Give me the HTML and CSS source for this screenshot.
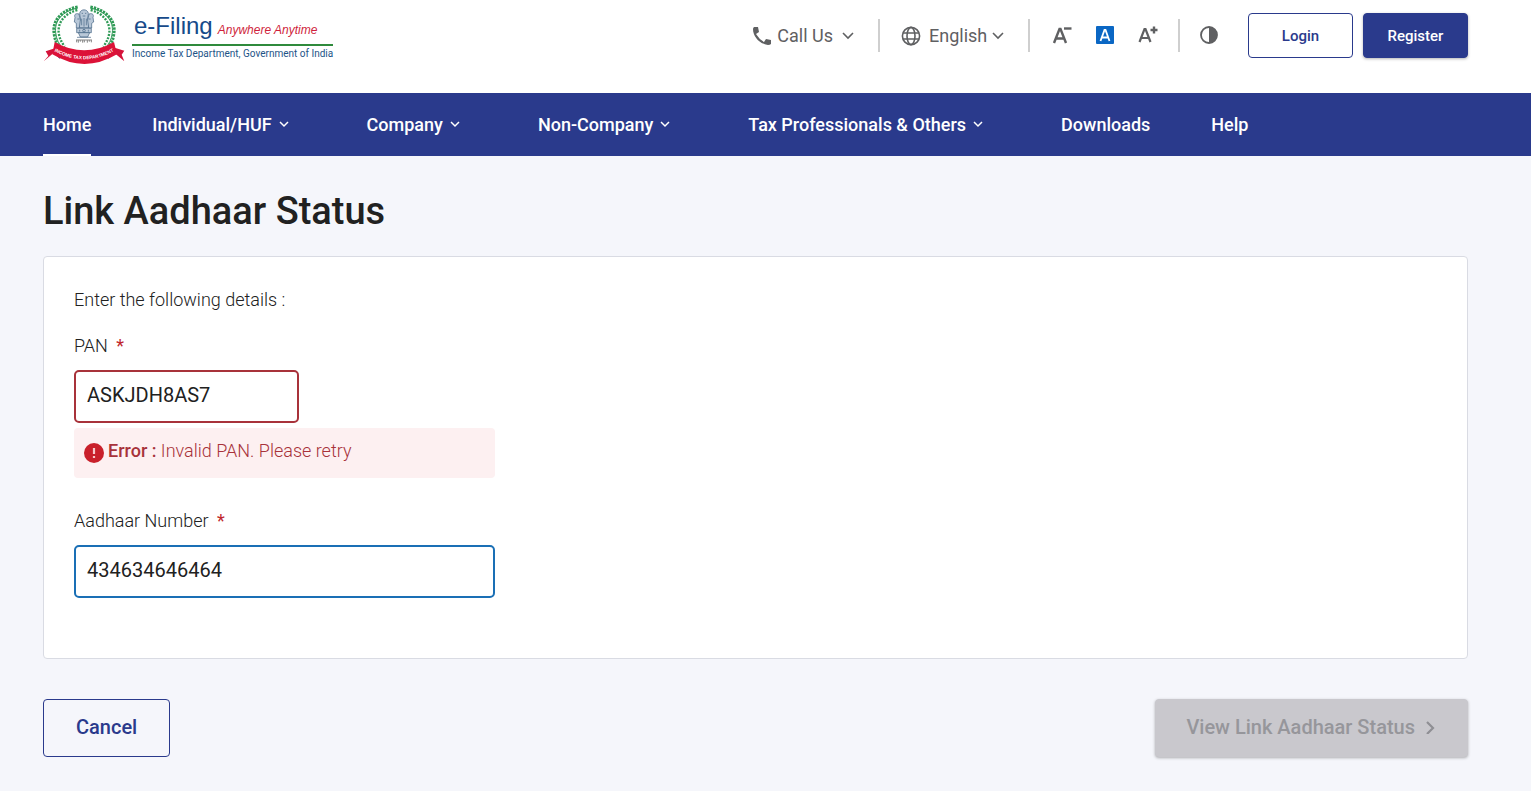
FILE: index.html
```html
<!DOCTYPE html>
<html lang="en">
<head>
    <meta charset="UTF-8">
    <meta name="viewport" content="width=device-width, initial-scale=1.0">
    <title>Link Aadhaar Status</title>
    <link rel="stylesheet" href="styles.css">
</head>
<body>
    <header class="top-bar">
        <a href="#" class="logo">
            <svg class="emblem" viewBox="24 6 246 189" aria-hidden="true">
                <!-- Wreath -->
                <g fill="none" stroke="#2f9a56">
                    <path d="M127 24C82 34 58 62 62 98c2 20 10 34 22 48" stroke-width="3"/>
                    <path d="M167 24c45 10 69 38 65 74-2 20-10 34-22 48" stroke-width="3"/>
                    <path d="M128 21C80 30 52 62 57 98c2 20 8 34 20 48" stroke-width="9" stroke-dasharray="7 3"/>
                    <path d="M166 21c48 9 76 41 71 77-2 20-8 34-20 48" stroke-width="9" stroke-dasharray="7 3"/>
                    <path d="M127 30C90 40 68 66 71 98c2 16 8 28 18 42" stroke-width="7" stroke-dasharray="6 4"/>
                    <path d="M167 30c37 10 59 36 56 68-2 16-8 28-18 42" stroke-width="7" stroke-dasharray="6 4"/>
                </g>
                <!-- Lions and abacus -->
                <g fill="#b9c8d8" stroke="#3e5f80" stroke-width="2">
                    <path d="M134 40c2-14 24-14 26 0l-2 19 4 8-2 16h-26l-2-16 4-8z"/>
                    <path d="M132 42c-12-4-15 4-12 10l-2 14 6 4v14h9l3-24z"/>
                    <path d="M162 42c12-4 15 4 12 10l2 14-6 4v14h-9l-3-24z"/>
                    <path d="M125 85h44v13h-44z"/>
                    <path d="M130 98h34l-6 13h-22z"/>
                </g>
                <g fill="none" stroke="#3e5f80" stroke-width="2">
                    <path d="M140 40h4M150 40h4M143 48h8M140 56v20M147 54v26M154 56v20M127 57h6M161 57h6M126 112h42"/>
                    <circle cx="147" cy="92" r="4"/>
                    <path d="M134 89v6M160 89v6"/>
                    <path d="M123 120h48M125 121v6M130 121v7M136 121v4M143 121v7M148 121v6M157 121v7M163 121v4M169 121v6" stroke="#444"/>
                </g>
                <!-- Ribbon -->
                <path d="M62 154l-36 30 14-16-8-14 30-10zM232 154l36 30-8-20 8-12-34-10z" fill="#d5133a"/>
                <path d="M56 158l18 18 8-10zM238 158l-18 18-8-10z" fill="#2a3f86"/>
                <path d="M59 126q88 50 178 0l9 37q-98 58-194 0z" fill="#dc1238"/>
                <path id="ribbonLine" d="M46 147q101 62 202 0" fill="none"/>
                <text class="ribbon-text"><textPath href="#ribbonLine" startOffset="50%" text-anchor="middle">INCOME TAX DEPARTMENT</textPath></text>
            </svg>
            <span class="brand">
                <span class="brand-top"><span class="brand-name">e-Filing</span> <em class="brand-slogan">Anywhere Anytime</em></span>
                <span class="brand-dept">Income Tax Department, Government of India</span>
            </span>
        </a>

        <div class="tools">
            <button type="button" class="tool call">
                <svg width="20" height="20" viewBox="0 0 20 20" aria-hidden="true"><path d="M2 1h4l1 5-3 2q3 5 8 8l2-3 5 1v4q-1 1-3 1C8 18 1 11 1 3q0-1 1-2z" fill="#5f6062"/></svg>
                <span>Call Us</span>
                <svg class="arrow" width="12" height="8" viewBox="0 0 12 8" aria-hidden="true"><path d="M1 1l5 5 5-5" fill="none" stroke="#5f6062" stroke-width="1.6"/></svg>
            </button>
            <div class="tool language">
                <svg width="20" height="20" viewBox="0 0 20 20" fill="none" stroke="#5f6062" stroke-width="1.6" aria-hidden="true"><circle cx="10" cy="10" r="8.6"/><ellipse cx="10" cy="10" rx="4" ry="8.6"/><path d="M2 7h16M2 13h16"/></svg>
                <select aria-label="Language">
                    <option>English</option>
                </select>
                <svg class="arrow" width="12" height="8" viewBox="0 0 12 8" aria-hidden="true"><path d="M1 1l5 5 5-5" fill="none" stroke="#5f6062" stroke-width="1.6"/></svg>
            </div>
            <div class="tool font-size">
                <button type="button" aria-label="Decrease text size">
                    <svg width="20" height="20" viewBox="0 0 20 20" fill="none" stroke="#5f6062" aria-hidden="true"><path d="M2 17L7.500 3h1l5.500 14M4 12.500h8" stroke-width="2.4"/><path d="M12 2.500h7.500" stroke-width="2.4"/></svg>
                </button>
                <button type="button" aria-label="Default text size">
                    <svg width="20" height="20" viewBox="0 0 20 20" aria-hidden="true"><rect x="1" y="0" width="18" height="18" rx="1" fill="#0a67c4"/><path d="M5.500 15l4-11h1l4 11M7 11.500h6" fill="none" stroke="#fff" stroke-width="1.800"/></svg>
                </button>
                <button type="button" aria-label="Increase text size">
                    <svg width="20" height="20" viewBox="0 0 20 20" fill="none" stroke="#5f6062" aria-hidden="true"><path d="M1.500 16L6.500 3h1l5 13M3.500 12h7" stroke-width="2.200"/><path d="M12.500 4h7M16 0.500v7" stroke-width="2.400"/></svg>
                </button>
            </div>
            <button type="button" class="tool contrast" aria-label="Contrast">
                <svg width="20" height="20" viewBox="0 0 20 20" aria-hidden="true"><circle cx="10" cy="9" r="8" fill="none" stroke="#5f6062" stroke-width="1.800"/><path d="M10 1a8 8 0 0 1 0 16z" fill="#5f6062"/></svg>
            </button>
            <button type="button" class="btn btn-small">Login</button>
            <button type="button" class="btn btn-small btn-primary">Register</button>
        </div>
    </header>

    <nav class="main-nav">
        <a href="#" class="nav-item active">Home</a>
        <button type="button" class="nav-item has-menu">Individual/HUF <svg width="10" height="8" viewBox="0 0 10 8" aria-hidden="true"><path d="M1 1l4 4 4-4"/></svg></button>
        <button type="button" class="nav-item has-menu">Company <svg width="10" height="8" viewBox="0 0 10 8" aria-hidden="true"><path d="M1 1l4 4 4-4"/></svg></button>
        <button type="button" class="nav-item has-menu">Non-Company <svg width="10" height="8" viewBox="0 0 10 8" aria-hidden="true"><path d="M1 1l4 4 4-4"/></svg></button>
        <button type="button" class="nav-item has-menu">Tax Professionals &amp; Others <svg width="10" height="8" viewBox="0 0 10 8" aria-hidden="true"><path d="M1 1l4 4 4-4"/></svg></button>
        <a href="#" class="nav-item">Downloads</a>
        <a href="#" class="nav-item">Help</a>
    </nav>

    <main class="content">
        <h1>Link Aadhaar Status</h1>

        <form id="statusForm" class="card">
            <p class="intro">Enter the following details :</p>

            <label for="pan">PAN <span class="required">*</span></label>
            <input type="text" id="pan" class="field field-pan" value="ASKJDH8AS7" aria-invalid="true" aria-describedby="panError">
            <p id="panError" class="error">
                <svg width="20" height="20" viewBox="0 0 20 20" aria-hidden="true"><circle cx="10" cy="10" r="10" fill="#c9202b"/><path d="M10 5v6M10 13v2" stroke="#f6c9cb" stroke-width="2.200"/></svg>
                <span><strong>Error :</strong> Invalid PAN. Please retry</span>
            </p>

            <label for="aadhaar">Aadhaar Number <span class="required">*</span></label>
            <input type="text" id="aadhaar" class="field field-aadhaar" value="434634646464">
        </form>

        <div class="actions">
            <button type="button" class="btn btn-large">Cancel</button>
            <button type="submit" form="statusForm" class="btn btn-large btn-view" disabled>View Link Aadhaar Status
                <svg width="10" height="14" viewBox="0 0 10 14" aria-hidden="true"><path d="M2 2l6 6-6 6" fill="none" stroke="#8f8f94" stroke-width="2.200"/></svg>
            </button>
        </div>
    </main>
</body>
</html>
```
FILE: styles.css
```css
:root {
    --primary-color: #2a3a8c;
    --text-color: #212121;
    --muted-color: #5f6062;
    --error-color: #a8323a;
    --focus-color: #1a6fb5;
    --page-background: #f5f6fb;
    --side-left: 43px;
    --side-right: 63px;
}

* {
    box-sizing: border-box;
}

body {
    margin: 0;
    font-family: Roboto, sans-serif;
    font-size: 18px;
    line-height: 24px;
    color: var(--text-color);
    background-color: var(--page-background);
}

button, select, input {
    font: inherit;
    color: inherit;
}

button, select {
    background: none;
    border: none;
    padding: 0;
    cursor: pointer;
}

svg {
    display: block;
    flex: none;
}

/* Top bar */
.top-bar {
    display: flex;
    justify-content: space-between;
    align-items: flex-start;
    min-height: 93px;
    padding: 2px var(--side-right) 0 var(--side-left);
    background-color: white;
}

.logo {
    display: flex;
    gap: 7px;
    text-decoration: none;
}

.emblem {
    width: 82px;
    height: 63px;
}

.ribbon-text {
    font: bold 14px "Liberation Sans", sans-serif;
    fill: white;
}

.brand {
    display: flex;
    flex-direction: column;
    padding-top: 10px;
    font-family: "Liberation Sans", sans-serif;
    white-space: nowrap;
}

.brand-top {
    padding: 0 2px;
    line-height: 28px;
    border-bottom: 2px solid #2f8a3c;
}

.brand-name {
    font-size: 24px;
    color: #164a8a;
}

.brand-slogan {
    font-size: 12px;
    color: #cf1f3c;
}

.brand-dept {
    font-family: Roboto, sans-serif;
    font-size: 10px;
    line-height: 16px;
    color: #1d5487;
}

.tools {
    display: flex;
    align-items: center;
    padding-top: 11px;
    color: var(--muted-color);
}

.tool {
    display: flex;
    align-items: center;
    height: 33px;
}

.call {
    gap: 5px;
    padding-right: 24px;
}

.call .arrow {
    margin-left: 4px;
}

.language {
    gap: 8px;
    padding: 0 24px 0 21px;
    border-left: 2px solid #cfcfcf;
    border-right: 2px solid #cfcfcf;
}

.language select {
    appearance: none;
}

.language .arrow {
    margin-left: -4px;
}

.font-size {
    gap: 23px;
    padding: 0 20px 0 22px;
    border-right: 2px solid #cfcfcf;
}

.contrast {
    padding: 0 29px 0 19px;
}

/* Buttons */
.btn {
    border: 1px solid var(--primary-color);
    border-radius: 4px;
    font-weight: 500;
    color: var(--primary-color);
}

.btn-small {
    width: 105px;
    height: 45px;
    font-size: 15px;
}

.btn-primary {
    margin-left: 10px;
    color: white;
    background-color: var(--primary-color);
    box-shadow: 0 1px 3px rgba(0, 0, 0, 0.3);
}

.btn-large {
    display: flex;
    align-items: center;
    gap: 10px;
    height: 58px;
    padding: 0 32px 2px;
    font-size: 20px;
}

.btn-view {
    padding: 0 32px 2px 30px;
    border-color: #c9c8cd;
    color: #96969b;
    background-color: #c9c8cd;
    box-shadow: 0 1px 3px rgba(0, 0, 0, 0.3);
    cursor: default;
}

/* Navigation */
.main-nav {
    display: flex;
    gap: 61px;
    height: 63px;
    padding: 0 var(--side-right) 0 var(--side-left);
    background-color: var(--primary-color);
}

.nav-item {
    display: flex;
    align-items: center;
    gap: 7px;
    padding-top: 2px;
    border-bottom: 2px solid transparent;
    font-weight: 500;
    color: white;
    text-decoration: none;
    white-space: nowrap;
}

.nav-item.active {
    border-bottom-color: white;
}

.nav-item svg {
    fill: none;
    stroke: white;
    stroke-width: 1.5;
}

.has-menu {
    padding-right: 17px;
}

/* Page */
.content {
    padding: 31px var(--side-right) 34px var(--side-left);
}

h1 {
    margin: 0 0 21px;
    font-size: 38px;
    font-weight: 500;
    line-height: 48px;
}

.card {
    display: flex;
    flex-direction: column;
    align-items: flex-start;
    padding: 31px 30px 60px;
    background-color: white;
    border: 1px solid #d9dbe3;
    border-radius: 4px;
    font-weight: 300;
}

.intro {
    margin: 0 0 22px;
}

.card label {
    margin-bottom: 12px;
}

.required {
    margin-left: 4px;
    font-weight: 400;
    color: #c0272d;
}

.field {
    width: 100%;
    height: 53px;
    padding: 0 11px 3px;
    border: 2px solid var(--focus-color);
    border-radius: 5px;
    font-size: 20px;
    font-weight: 400;
    background-color: white;
    outline: none;
}

.field-pan {
    max-width: 225px;
    border-color: var(--error-color);
}

.field-aadhaar {
    max-width: 421px;
}

.error {
    display: flex;
    gap: 4px;
    width: 100%;
    max-width: 421px;
    min-height: 50px;
    margin: 5px 0 31px;
    padding: 11px 10px;
    border-radius: 4px;
    color: var(--error-color);
    background-color: #fdf0f1;
}

.error svg {
    margin-top: 4px;
}

.error strong {
    font-weight: 500;
}

.actions {
    display: flex;
    justify-content: space-between;
    margin-top: 40px;
}
```
